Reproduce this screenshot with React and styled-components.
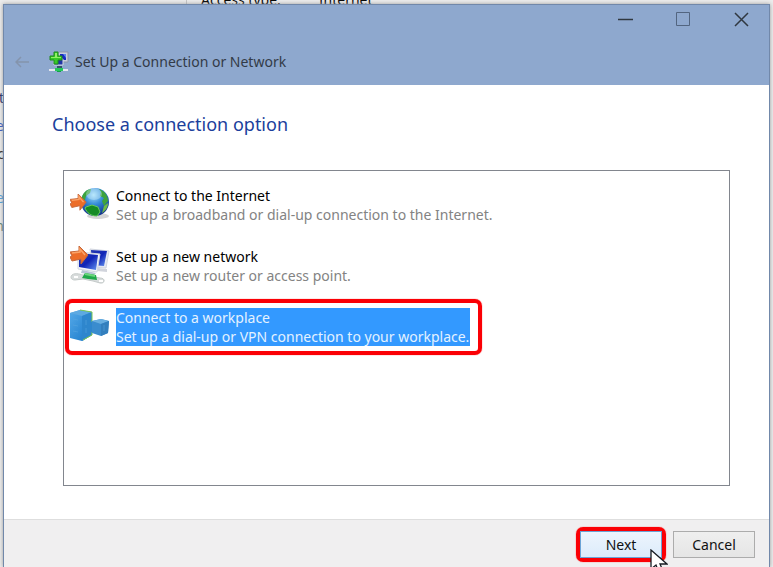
import React, { useState } from "react";
import styled, { createGlobalStyle, css } from "styled-components";

const GlobalStyle = createGlobalStyle`
  * { box-sizing: border-box; }
  body {
    margin: 0;
    background: #ececec;
    font-family: "Noto Sans", "Open Sans", sans-serif;
    font-size: 14px;
    color: #000;
  }
`;

const Screen = styled.div`
  position: relative;
  display: flex;
  min-height: 100vh;
  padding: 4px 3px 0;
  overflow: hidden;
`;

const BackdropTop = styled.div`
  position: absolute;
  top: -10px;
  left: 186px;
  display: flex;
  gap: 38px;
  padding-left: 14px;
  border-left: 1px solid #c4c4c4;
  line-height: 20px;
`;

const BackdropSide = styled.div`
  position: absolute;
  top: 88px;
  left: 0;
  width: 4px;
  display: flex;
  flex-direction: column;
  align-items: flex-end;
  gap: 8px;
  line-height: 20px;
`;

const Fragment = styled.span`
  color: ${(p) => p.$color};
`;

const FragmentGap = styled.span`
  height: 8px;
`;

const Dialog = styled.form`
  position: relative;
  flex: 1;
  display: flex;
  flex-direction: column;
  background: #fff;
  border: 1px solid #7188aa;
  border-bottom: 0;
  box-shadow: 0 0 4px #999;
`;

const Header = styled.header`
  display: flex;
  flex-direction: column;
  height: 80px;
  background: #8ea8ce;
`;

const CaptionBar = styled.div`
  display: flex;
  flex: none;
  justify-content: flex-end;
  gap: 2px;
  height: 28px;
`;

const CaptionButton = styled.button`
  width: 56px;
  padding: 0;
  border: 0;
  background: none;
  color: #303840;
  svg { display: block; margin: 0 auto; }
`;

const TitleRow = styled.div`
  display: flex;
  flex: 1;
  align-items: center;
  padding: 6px 0 0 11px;
`;

const BackButton = styled.button`
  width: 16px;
  height: 16px;
  margin-right: 18px;
  padding: 0;
  border: 0;
  background: none;
  color: #8494ac;
  svg { display: block; }
`;

const Title = styled.h1`
  margin: 0 0 0 6px;
  font-size: 14px;
  font-weight: 400;
  line-height: 20px;
  color: #333b47;
`;

const Body = styled.main`
  flex: 1;
  display: flex;
  flex-direction: column;
  padding: 25px 39px 33px 48px;
`;

const Heading = styled.h2`
  margin: 0;
  font-size: 18px;
  font-weight: 400;
  line-height: 28px;
  color: #1b409c;
`;

const OptionList = styled.div`
  flex: 1;
  display: flex;
  flex-direction: column;
  align-items: flex-start;
  gap: 5px;
  margin: 32px 0 0 11px;
  padding: 6px 1px;
  border: 1px solid #82868e;
`;

const redFrame = css`
  border-color: #fb0005;
  box-shadow: 0 0 1px #fb0005;
`;

const Option = styled.label`
  display: flex;
  align-items: center;
  gap: 6px;
  height: 56px;
  padding: 0 8px 0 1px;
  border: 4px solid transparent;
  border-radius: 7px;
  ${(p) => p.$selected && redFrame}
  svg { flex: none; }
`;

const HiddenRadio = styled.input`
  position: absolute;
  opacity: 0;
  width: 1px;
  height: 1px;
  margin: 0;
`;

const OptionText = styled.span`
  display: flex;
  flex-direction: column;
  padding-right: 1px;
  line-height: 19px;
  color: ${(p) => (p.$selected ? "#e4f2ff" : "#000")};
  background: ${(p) => (p.$selected ? "#3399ff" : "transparent")};
`;

const OptionDetail = styled.span`
  color: ${(p) => (p.$selected ? "#e4f2ff" : "#838383")};
`;

const Footer = styled.footer`
  display: flex;
  align-items: flex-start;
  justify-content: flex-end;
  gap: 7px;
  height: 48px;
  padding: 7px 14px 0 0;
  background: #f0eff0;
  border-top: 1px solid #dedede;
`;

const NextFrame = styled.div`
  position: relative;
  border: 4px solid transparent;
  border-radius: 7px;
  ${redFrame}
`;

const Button = styled.button`
  display: block;
  width: 82px;
  height: 27px;
  padding: 0;
  font: inherit;
  line-height: 24px;
  color: #111;
  border: 1px solid ${(p) => (p.$primary ? "#6ba3d6" : "#acacac")};
  background: ${(p) =>
    p.$primary
      ? "linear-gradient(#edf5fd, #dcebfb)"
      : "linear-gradient(#efefef, #e5e5e5)"};
`;

const CancelSlot = styled.div`
  padding-top: 4px;
`;

const Pointer = styled.svg`
  position: absolute;
  top: 18px;
  left: 70px;
  pointer-events: none;
`;

function SetupIcon() {
  return (
    <svg width="20" height="22" viewBox="0 0 20 22" aria-hidden="true">
      <path d="M9 1h10v10H9z" fill="#c8cede" stroke="#8b94a8" />
      <path d="M11 3h6v6h-6z" fill="#192ac0" />
      <path d="M14 3h3v4z" fill="#5a81eb" />
      <path d="M5 8h9v6H5z" fill="#2035a7" stroke="#d5d8e2" />
      <path d="M8 15h5v2H8z" fill="#35546b" />
      <path d="M0 18h19v2H0z" fill="#e4e7ee" />
      <path d="M6 17h8v3H6z" fill="#25c85c" />
      <path d="M8 20h4v1H8z" fill="#14a248" />
      <path d="M5 1h4v4h4v4H9v4H5V9H1V5h4z" fill="#35c927" stroke="#1f8a1f" />
      <path d="M6 2h2v4h4v1H2V6h4z" fill="#90f064" />
    </svg>
  );
}

function OrangeArrow() {
  return (
    <g>
      <path d="M0 6l9-1V0l9 9-7 9v-5l-9 2-2-4 2-1z" fill="#ec6d28" stroke="#c4683c" strokeWidth="1" />
      <path d="M2 7l8-1V3l5 6" fill="none" stroke="#fba468" strokeWidth="1.5" />
    </g>
  );
}

function InternetIcon() {
  return (
    <svg width="40" height="40" viewBox="0 0 40 40" aria-hidden="true">
      <defs>
        <radialGradient id="globe" cx="45%" cy="25%" r="75%">
          <stop offset="0" stopColor="#a7e1fa" />
          <stop offset=".45" stopColor="#358bd8" />
          <stop offset="1" stopColor="#102f8b" />
        </radialGradient>
      </defs>
      <ellipse cx="28" cy="31" rx="11" ry="3" fill="#d4d4d4" />
      <circle cx="25" cy="17" r="14" fill="url(#globe)" />
      <path d="M12 12c1-4 5-8 9-8l-1 4-4 3-1 4-4 2zM29 4c6 2 9 7 9 12l-4 5-2-5 2-3-4-2 1-4z" fill="#3da33d" />
      <path d="M16 22l6-2 6 2 2 5-3 4c-6 0-10-3-12-8z" fill="#168a25" stroke="#65ca56" />
      <path d="M34 21l4-3c0 5-3 8-6 10z" fill="#6ebc45" />
      <ellipse cx="24" cy="9" rx="8" ry="6" fill="#d9f4ff" opacity=".35" />
      <g transform="translate(0 9) scale(.9)"><OrangeArrow /></g>
    </svg>
  );
}

function NetworkIcon() {
  return (
    <svg width="40" height="40" viewBox="0 0 40 40" aria-hidden="true">
      <defs>
        <linearGradient id="screen" x2="1" y2="1">
          <stop stopColor="#263bb0" />
          <stop offset=".5" stopColor="#1024b6" />
          <stop offset="1" stopColor="#6898f3" />
        </linearGradient>
      </defs>
      <path d="M20 3l19 2-3 17-14-1z" fill="#e5e9f2" stroke="#d1d5df" />
      <path d="M21 4l16 1-3 15-12-1z" fill="url(#screen)" />
      <path d="M28 22l9 1v3l-10-1z" fill="#d1d4dc" />
      <path d="M8 6l22 2-3 18-19-3z" fill="#f3f5fa" stroke="#d1d6e1" />
      <path d="M9 7l19 2-2 15-17-3z" fill="url(#screen)" />
      <path d="M12 24l14 3-2 2-13-2z" fill="#b8c5d5" />
      <path d="M2 29c4-3 9 0 12 0l16 3c6 0 5 6 0 5l-7-2-10-2-8 1c-4 0-5-3-3-5z" fill="#d9dddd" stroke="#c4cac9" />
      <path d="M15 27l11 2 1 5-9-1-6-1z" fill="#20a94a" />
      <path d="M15 28l10 2" stroke="#6bd77b" strokeWidth="2" />
      <path d="M4 31h4M29 35h4" stroke="#fff" strokeWidth="2" />
      <OrangeArrow />
    </svg>
  );
}

function WorkplaceIcon() {
  return (
    <svg width="40" height="40" viewBox="0 0 40 40" aria-hidden="true">
      <defs>
        <linearGradient id="tower" x2="1" y2="1">
          <stop stopColor="#56aae9" />
          <stop offset=".6" stopColor="#308bd5" />
          <stop offset="1" stopColor="#1e76c2" />
        </linearGradient>
      </defs>
      <path d="M0 6l10-3 12 2v23l-10 6-12-3z" fill="url(#tower)" />
      <path d="M0 6l10-3 12 2-10 4z" fill="#5ea9e1" />
      <path d="M12 9l10-4v23l-10 6z" fill="#2e86cd" />
      <path d="M10 3l12 2v10M22 25v3l-9 5" fill="none" stroke="#7ac850" />
      <path d="M22 14l9-2 8 2-1 12-7 3-9-3z" fill="#3a8cce" />
      <path d="M22 14l9-2 8 2-8 3z" fill="#68aee0" />
      <path d="M31 17l8-3-1 12-7 3z" fill="#337fbd" />
      <path d="M3 12l5 1m-5 5l5 1m-5 5l5 1M16 13v5m0 3v5M34 18v6" stroke="#5ca9e1" opacity=".5" />
    </svg>
  );
}

const options = [
  { id: "internet", title: "Connect to the Internet", detail: "Set up a broadband or dial-up connection to the Internet.", Icon: InternetIcon },
  { id: "network", title: "Set up a new network", detail: "Set up a new router or access point.", Icon: NetworkIcon },
  { id: "workplace", title: "Connect to a workplace", detail: "Set up a dial-up or VPN connection to your workplace.", Icon: WorkplaceIcon },
];

export default function App() {
  const [selected, setSelected] = useState("workplace");
  return (
    <Screen>
      <GlobalStyle />
      <BackdropTop aria-hidden="true">
        <span>Access type:</span>
        <span>Internet</span>
      </BackdropTop>
      <BackdropSide aria-hidden="true">
        <Fragment $color="#172b69">t</Fragment>
        <Fragment $color="#3157c2">e</Fragment>
        <Fragment $color="#1d1a18">c</Fragment>
        <FragmentGap />
        <Fragment $color="#4aa0dc">e</Fragment>
        <Fragment $color="#5c8272">n</Fragment>
      </BackdropSide>
      <Dialog onSubmit={(e) => e.preventDefault()}>
        <Header>
          <CaptionBar>
            <CaptionButton type="button" aria-label="Minimize">
              <svg width="16" height="16" viewBox="0 0 16 16"><path d="M1 8.5h15" stroke="currentColor" strokeWidth="1.5" /></svg>
            </CaptionButton>
            <CaptionButton type="button" aria-label="Maximize">
              <svg width="16" height="16" viewBox="0 0 16 16"><path d="M1.500 1.500h13v13h-13z" fill="none" stroke="#526580" /></svg>
            </CaptionButton>
            <CaptionButton type="button" aria-label="Close">
              <svg width="16" height="16" viewBox="0 0 16 16"><path d="M2 2l13 13M15 2L2 15" stroke="currentColor" strokeWidth="1.5" /></svg>
            </CaptionButton>
          </CaptionBar>
          <TitleRow>
            <BackButton type="button" aria-label="Back">
              <svg width="16" height="16" viewBox="0 0 16 16"><path d="M14 8H1M6 3L1 8l5 5" fill="none" stroke="currentColor" strokeWidth="1.5" /></svg>
            </BackButton>
            <SetupIcon />
            <Title>Set Up a Connection or Network</Title>
          </TitleRow>
        </Header>
        <Body>
          <Heading>Choose a connection option</Heading>
          <OptionList role="radiogroup" aria-label="Connection option">
            {options.map(({ id, title, detail, Icon }) => (
              <Option key={id} $selected={selected === id}>
                <HiddenRadio type="radio" name="option" checked={selected === id} onChange={() => setSelected(id)} />
                <Icon />
                <OptionText $selected={selected === id}>
                  <span>{title}</span>
                  <OptionDetail $selected={selected === id}>{detail}</OptionDetail>
                </OptionText>
              </Option>
            ))}
          </OptionList>
        </Body>
        <Footer>
          <NextFrame>
            <Button type="submit" $primary>Next</Button>
            <Pointer width="18" height="26" viewBox="0 0 18 26" aria-hidden="true">
              <path d="M1 1v19l5-4 3 8 4-2-3-7h7z" fill="#fff" stroke="#171b22" strokeWidth="1.3" />
            </Pointer>
          </NextFrame>
          <CancelSlot>
            <Button type="button">Cancel</Button>
          </CancelSlot>
        </Footer>
      </Dialog>
    </Screen>
  );
}
